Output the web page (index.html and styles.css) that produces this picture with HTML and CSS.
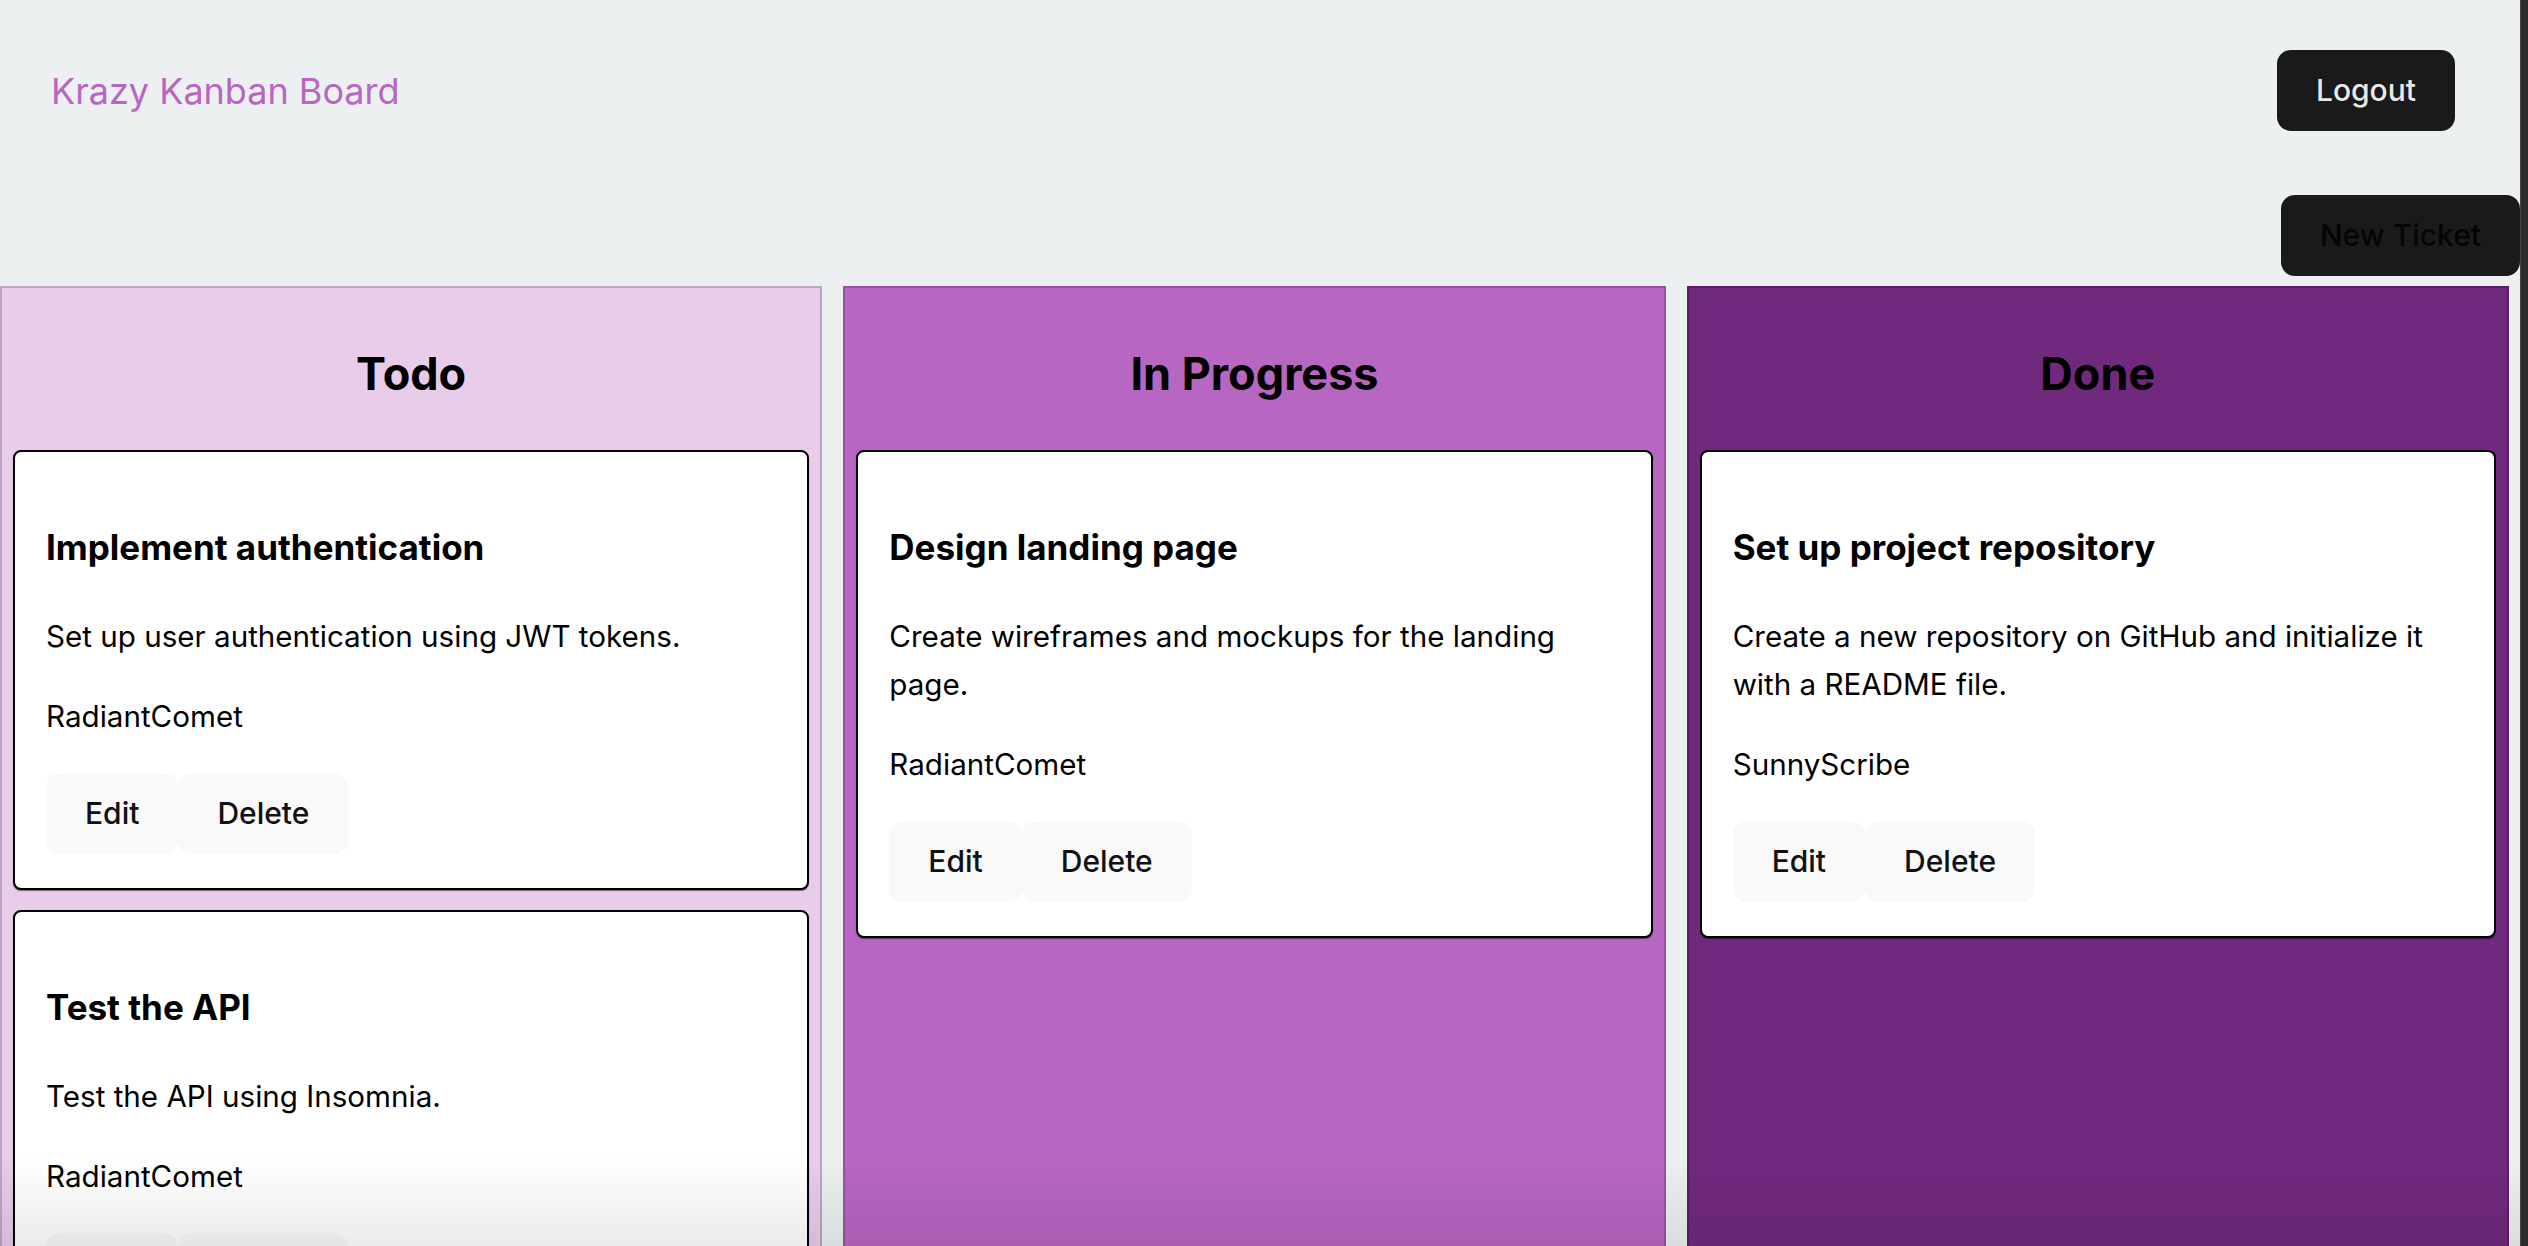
FILE: index.html
```html
<!DOCTYPE html>
<html lang="en">
<head>
<meta charset="UTF-8">
<title>Krazy Kanban Board</title>
<link rel="stylesheet" href="styles.css">
</head>
<body>
<div class="page">
  <nav class="nav">
    <span class="nav-title">Krazy Kanban Board</span>
    <button class="btn btn-dark">Logout</button>
  </nav>
  <div class="toolbar">
    <button class="btn btn-dark btn-new">New Ticket</button>
  </div>
  <main class="board">
    <section class="lane lane-todo">
      <h2 class="lane-title">Todo</h2>
      <div class="card">
        <h3 class="card-title">Implement authentication</h3>
        <p class="card-desc">Set up user authentication using JWT tokens.</p>
        <p class="card-author">RadiantComet</p>
        <div class="card-actions"><button class="btn btn-light">Edit</button><button class="btn btn-light">Delete</button></div>
      </div>
      <div class="card">
        <h3 class="card-title">Test the API</h3>
        <p class="card-desc">Test the API using Insomnia.</p>
        <p class="card-author">RadiantComet</p>
        <div class="card-actions"><button class="btn btn-light">Edit</button><button class="btn btn-light">Delete</button></div>
      </div>
    </section>
    <section class="lane lane-progress">
      <h2 class="lane-title">In Progress</h2>
      <div class="card">
        <h3 class="card-title">Design landing page</h3>
        <p class="card-desc">Create wireframes and mockups for the landing page.</p>
        <p class="card-author">RadiantComet</p>
        <div class="card-actions"><button class="btn btn-light">Edit</button><button class="btn btn-light">Delete</button></div>
      </div>
    </section>
    <section class="lane lane-done">
      <h2 class="lane-title">Done</h2>
      <div class="card">
        <h3 class="card-title">Set up project repository</h3>
        <p class="card-desc">Create a new repository on GitHub and initialize it with a README file.</p>
        <p class="card-author">SunnyScribe</p>
        <div class="card-actions"><button class="btn btn-light">Edit</button><button class="btn btn-light">Delete</button></div>
      </div>
    </section>
  </main>
</div>
<div class="bottom-fade"></div>
<div class="scroll-strip"></div>
</body>
</html>
```

FILE: styles.css
```css
html, body {
  margin: 0;
  padding: 0;
  overflow: hidden;
}

body {
  background: #ecf0f1;
  font-family: Inter, "Noto Sans", "Liberation Sans", sans-serif;
  color: #000;
}

.page {
  width: calc(100% - 8px);
}

.nav {
  display: flex;
  justify-content: space-between;
  align-items: center;
  padding: 50px 65px 0 51px;
}

.nav-title {
  font-size: 36px;
  line-height: 44px;
  color: #b866c2;
  font-weight: 400;
}

.btn {
  font-family: Inter, "Noto Sans", "Liberation Sans", sans-serif;
  font-size: 30px;
  line-height: 45px;
  font-weight: 500;
  padding: 17px 38px;
  border: 1px solid transparent;
  border-radius: 14px;
  cursor: pointer;
}

.btn-dark {
  background: #1a1a1a;
  color: rgba(255, 255, 255, 0.92);
}

.btn-new {
  color: #050505;
}

.btn-light {
  background: #f9f9f9;
  color: #111;
}

.toolbar {
  display: flex;
  justify-content: flex-end;
  margin-top: 64px;
}

.board {
  display: flex;
  gap: 21px;
  padding-right: 11px;
  margin-top: 10px;
}

.lane {
  flex: 1;
  min-width: 0;
  border: 2px solid;
  padding: 11px 11px 40px;
  min-height: 1100px;
}

.lane-todo {
  background: #e9cbea;
  border-color: #bfa5c2;
}

.lane-progress {
  background: #b767c1;
  border-color: #9a53a3;
}

.lane-done {
  background: #71297e;
  border-color: #5c2068;
}

.lane-title {
  text-align: center;
  font-size: 45px;
  line-height: 67px;
  font-weight: 700;
  margin: 41px 0 43px;
}

.card {
  background: #fff;
  border: 2px solid #000;
  border-radius: 8px;
  padding: 31px 31px 34px;
  margin-bottom: 20px;
  box-shadow: 0 1px 1px rgba(0, 0, 0, 0.5);
}

.card-title {
  font-size: 35px;
  line-height: 52px;
  font-weight: 700;
  margin: 38px 0 39px;
}

.card-desc {
  font-size: 29.6px;
  line-height: 48px;
  margin: 0 0 32px;
}

.card-author {
  font-size: 29.6px;
  line-height: 48px;
  margin: 0 0 33px;
}

.card-actions {
  display: flex;
}

.bottom-fade {
  position: fixed;
  left: 0;
  right: 8px;
  bottom: 0;
  height: 90px;
  background: linear-gradient(to bottom, rgba(0, 0, 0, 0), rgba(0, 0, 0, 0.08));
  pointer-events: none;
}

.scroll-strip {
  position: fixed;
  top: 0;
  right: 0;
  bottom: 0;
  width: 7px;
  background: #2b2b2b;
  border-left: 1px solid #454545;
}
```
